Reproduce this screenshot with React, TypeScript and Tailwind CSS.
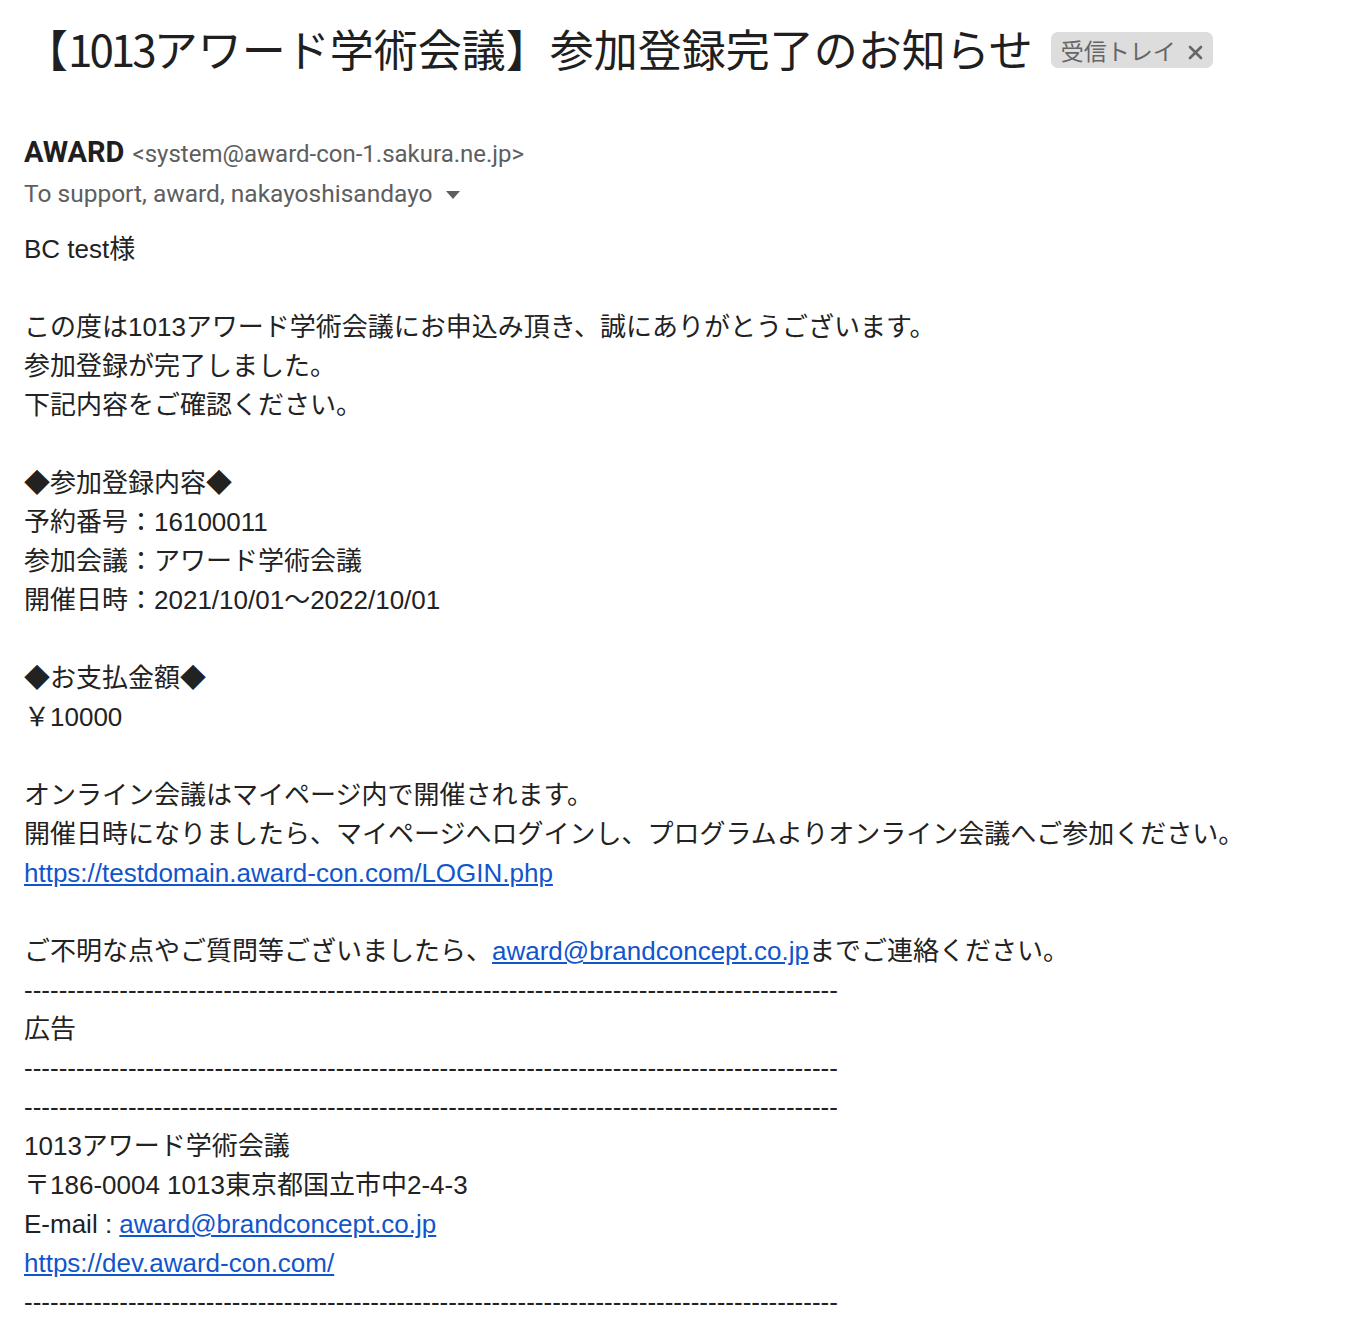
export default function App() {
  const dashes = "-".repeat(94)
  const body = "font-['Liberation_Sans','Noto_Sans_CJK_JP',sans-serif]"

  return (
    <div className="min-h-screen bg-white px-6 pt-5 text-[#222222]">
      {/* subject */}
      <div className="flex items-center gap-[18px]">
        <h1 className="font-['Noto_Sans_CJK_JP',sans-serif] text-[44px] font-normal leading-[56px] text-[#1f1f1f]">
          【<span className="tracking-[-3px]">1013</span>アワード学術会議】参加登録完了のお知らせ
        </h1>
        <span className="mt-1 flex h-9 items-center gap-3 rounded-[7px] bg-[#dddddd] pl-2.5 pr-2.5 font-['Noto_Sans_CJK_JP',sans-serif] text-[23px] text-[#666666]">
          受信トレイ
          <svg width="15" height="15" viewBox="0 0 15 15" className="mt-1">
            <path d="M2 2l11 11M13 2L2 13" stroke="#666666" strokeWidth="2.6" strokeLinecap="round" />
          </svg>
        </span>
      </div>

      {/* sender */}
      <div className="mt-[56px] font-['Roboto',sans-serif]">
        <div className="flex items-baseline gap-2 leading-[40px]">
          <span className="text-[29px] font-bold text-[#1f1f1f]">AWARD</span>
          <span className="text-[24px] text-[#5e5e5e]">&lt;system@award-con-1.sakura.ne.jp&gt;</span>
        </div>
        <div className="flex items-center gap-3 text-[24.5px] leading-[40px] text-[#5e5e5e]">
          To support, award, nakayoshisandayo
          <svg width="16" height="10" viewBox="0 0 16 10" className="mt-0.5">
            <path d="M1 1h14L8 9z" fill="#5e5e5e" />
          </svg>
        </div>
      </div>

      {/* body */}
      <div className={`${body} mt-[16px] text-[26px] leading-[39px] text-[#222222]`}>
        <p>BC test様</p>
        <p>&nbsp;</p>
        <p>この度は1013アワード学術会議にお申込み頂き、誠にありがとうございます。</p>
        <p>参加登録が完了しました。</p>
        <p>下記内容をご確認ください。</p>
        <p>&nbsp;</p>
        <p>◆参加登録内容◆</p>
        <p>予約番号：16100011</p>
        <p>参加会議：アワード学術会議</p>
        <p>開催日時：2021/10/01～2022/10/01</p>
        <p>&nbsp;</p>
        <p>◆お支払金額◆</p>
        <p>￥10000</p>
        <p>&nbsp;</p>
        <p>オンライン会議はマイページ内で開催されます。</p>
        <p>開催日時になりましたら、マイページへログインし、プログラムよりオンライン会議へご参加ください。</p>
        <p>
          <a href="#" className="text-[#1155cc] underline">https://testdomain.award-con.com/LOGIN.php</a>
        </p>
        <p>&nbsp;</p>
        <p>
          ご不明な点やご質問等ございましたら、
          <a href="#" className="text-[#1155cc] underline">award@brandconcept.co.jp</a>
          までご連絡ください。
        </p>
        <p>{dashes}</p>
        <p>広告</p>
        <p>{dashes}</p>
        <p>{dashes}</p>
        <p>1013アワード学術会議</p>
        <p>〒186-0004 1013東京都国立市中2-4-3</p>
        <p>
          E-mail :{" "}
          <a href="#" className="text-[#1155cc] underline">award@brandconcept.co.jp</a>
        </p>
        <p>
          <a href="#" className="text-[#1155cc] underline">https://dev.award-con.com/</a>
        </p>
        <p>{dashes}</p>
      </div>
    </div>
  )
}
